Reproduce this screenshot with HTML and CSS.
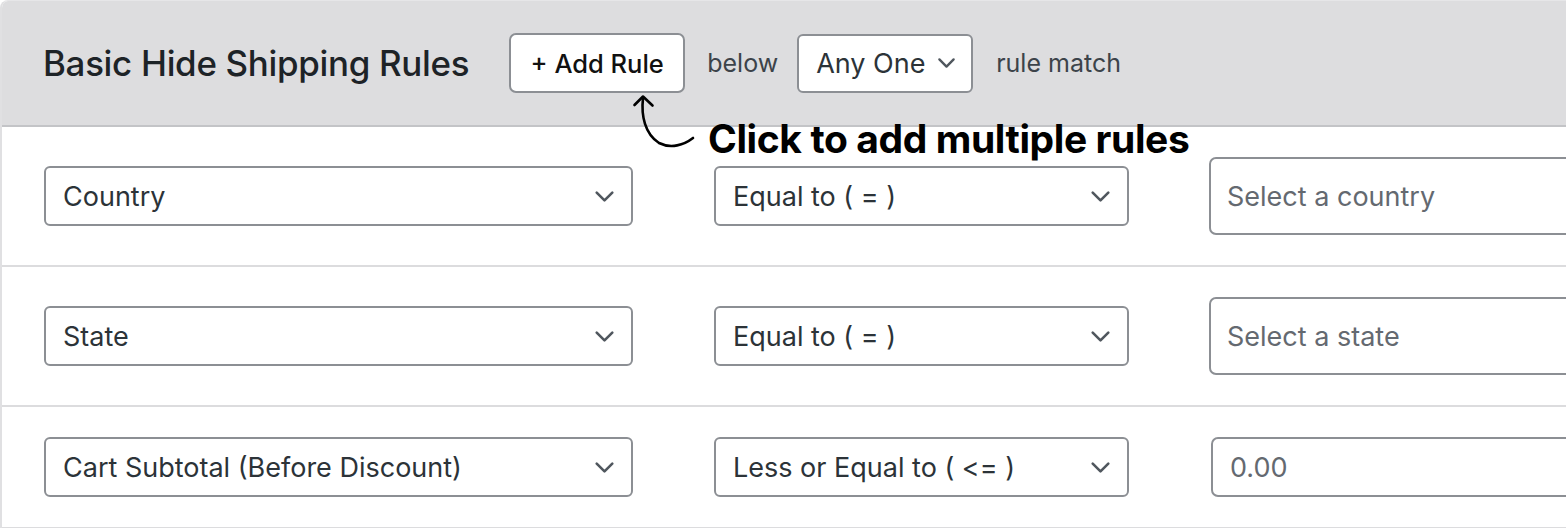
FILE: index.html
```html
<!DOCTYPE html>
<html lang="en">
<head>
<meta charset="utf-8">
<title>Basic Hide Shipping Rules</title>
<link rel="stylesheet" href="styles.css">
</head>
<body>
<div class="card">
  <div class="header">
    <h2 class="title">Basic Hide Shipping Rules</h2>
    <button class="btn">+ Add Rule</button>
    <span class="muted">below</span>
    <div class="select small"><span>Any One</span><svg class="chev" viewBox="0 0 16 10" width="19" height="12"><path d="M2 2 L8 8 L14 2" fill="none" stroke="#50575e" stroke-width="2" stroke-linecap="round" stroke-linejoin="round"/></svg></div>
    <span class="muted">rule match</span>
  </div>

  <div class="row">
    <div class="select c1"><span>Country</span><svg class="chev" viewBox="0 0 16 10" width="21" height="13"><path d="M2 2 L8 8 L14 2" fill="none" stroke="#50575e" stroke-width="2" stroke-linecap="round" stroke-linejoin="round"/></svg></div>
    <div class="select c2"><span>Equal to ( = )</span><svg class="chev" viewBox="0 0 16 10" width="21" height="13"><path d="M2 2 L8 8 L14 2" fill="none" stroke="#50575e" stroke-width="2" stroke-linecap="round" stroke-linejoin="round"/></svg></div>
    <div class="field tall"><span class="ph">Select a country</span></div>
  </div>

  <div class="row">
    <div class="select c1"><span>State</span><svg class="chev" viewBox="0 0 16 10" width="21" height="13"><path d="M2 2 L8 8 L14 2" fill="none" stroke="#50575e" stroke-width="2" stroke-linecap="round" stroke-linejoin="round"/></svg></div>
    <div class="select c2"><span>Equal to ( = )</span><svg class="chev" viewBox="0 0 16 10" width="21" height="13"><path d="M2 2 L8 8 L14 2" fill="none" stroke="#50575e" stroke-width="2" stroke-linecap="round" stroke-linejoin="round"/></svg></div>
    <div class="field tall"><span class="ph">Select a state</span></div>
  </div>

  <div class="row last">
    <div class="select c1"><span>Cart Subtotal (Before Discount)</span><svg class="chev" viewBox="0 0 16 10" width="21" height="13"><path d="M2 2 L8 8 L14 2" fill="none" stroke="#50575e" stroke-width="2" stroke-linecap="round" stroke-linejoin="round"/></svg></div>
    <div class="select c2"><span>Less or Equal to ( &lt;= )</span><svg class="chev" viewBox="0 0 16 10" width="21" height="13"><path d="M2 2 L8 8 L14 2" fill="none" stroke="#50575e" stroke-width="2" stroke-linecap="round" stroke-linejoin="round"/></svg></div>
    <div class="field num"><span class="ph">0.00</span></div>
  </div>

  <svg class="arrow" width="80" height="70" viewBox="620 85 80 70">
    <path d="M643 98 C641 116 645 134 659 143 C671 149 684 145 693 138" fill="none" stroke="#000" stroke-width="2.6" stroke-linecap="round"/>
    <path d="M634.5 105 L643 96.5 L652.5 105.5" fill="none" stroke="#000" stroke-width="2.6" stroke-linecap="round" stroke-linejoin="round"/>
  </svg>
  <div class="note">Click to add multiple rules</div>
</div>
</body>
</html>
```
FILE: styles.css
```css
html, body {
  margin: 0;
  padding: 0;
  background: #ffffff;
}
body {
  font-family: Inter, "Noto Sans", "Liberation Sans", sans-serif;
  color: #2c3338;
  overflow: hidden;
}
.card {
  position: relative;
  width: 1600px;
  border-left: 2px solid #e0e0e2;
  border-top: 1px solid #e6e6e8;
  border-top-left-radius: 8px;
  overflow: hidden;
  background: #fff;
}
.header {
  height: 124px;
  background: #dddddf;
  border-bottom: 2px solid #c3c4c7;
  display: flex;
  align-items: center;
  padding-left: 41px;
}
.title {
  margin: 0 40px 0 0;
  font-size: 34.9px;
  font-weight: 500;
  color: #1d2327;
  letter-spacing: -0.3px;
  flex: none;
}
.btn {
  box-sizing: border-box;
  flex: none;
  width: 176px;
  height: 60px;
  background: #fff;
  border: 2px solid #8c8f94;
  border-radius: 7px;
  font-family: Inter, "Liberation Sans", sans-serif;
  font-size: 25.5px;
  font-weight: 500;
  color: #111;
  padding: 0;
  margin-right: 22px;
}
.muted {
  flex: none;
  font-size: 25px;
  color: #3c434a;
  margin-right: 19px;
}
.select {
  box-sizing: border-box;
  flex: none;
  height: 59px;
  border: 2px solid #8c8f94;
  border-radius: 6px;
  background: #fff;
  display: flex;
  align-items: center;
  justify-content: space-between;
  padding: 0 16px 0 17px;
  font-size: 27px;
  color: #2c3338;
}
.select.small {
  width: 176px;
  margin-right: 23px;
  padding-right: 15px;
}
.row {
  display: flex;
  align-items: center;
  padding: 30px 0 30px 42px;
  border-bottom: 2px solid #dcdcde;
}
.row .select {
  height: 60px;
}
.c1 {
  width: 589px;
  margin-right: 81px;
}
.c2 {
  width: 415px;
  margin-right: 80px;
}
.field {
  box-sizing: border-box;
  flex: none;
  width: 420px;
  border: 2px solid #8c8f94;
  border-radius: 7px;
  background: #fff;
  display: flex;
  align-items: center;
  padding-left: 16px;
  font-size: 27px;
}
.field.tall {
  height: 78px;
}
.field.num {
  height: 60px;
  margin-left: 2px;
  padding-left: 17px;
}
.ph {
  color: #646970;
}
.arrow {
  position: absolute;
  left: 618px;
  top: 84px;
}
.note {
  position: absolute;
  left: 706px;
  top: 118px;
  font-family: Inter, "Liberation Sans", sans-serif;
  font-size: 39px;
  line-height: 1;
  font-weight: 700;
  letter-spacing: -0.4px;
  color: #000;
}
```
